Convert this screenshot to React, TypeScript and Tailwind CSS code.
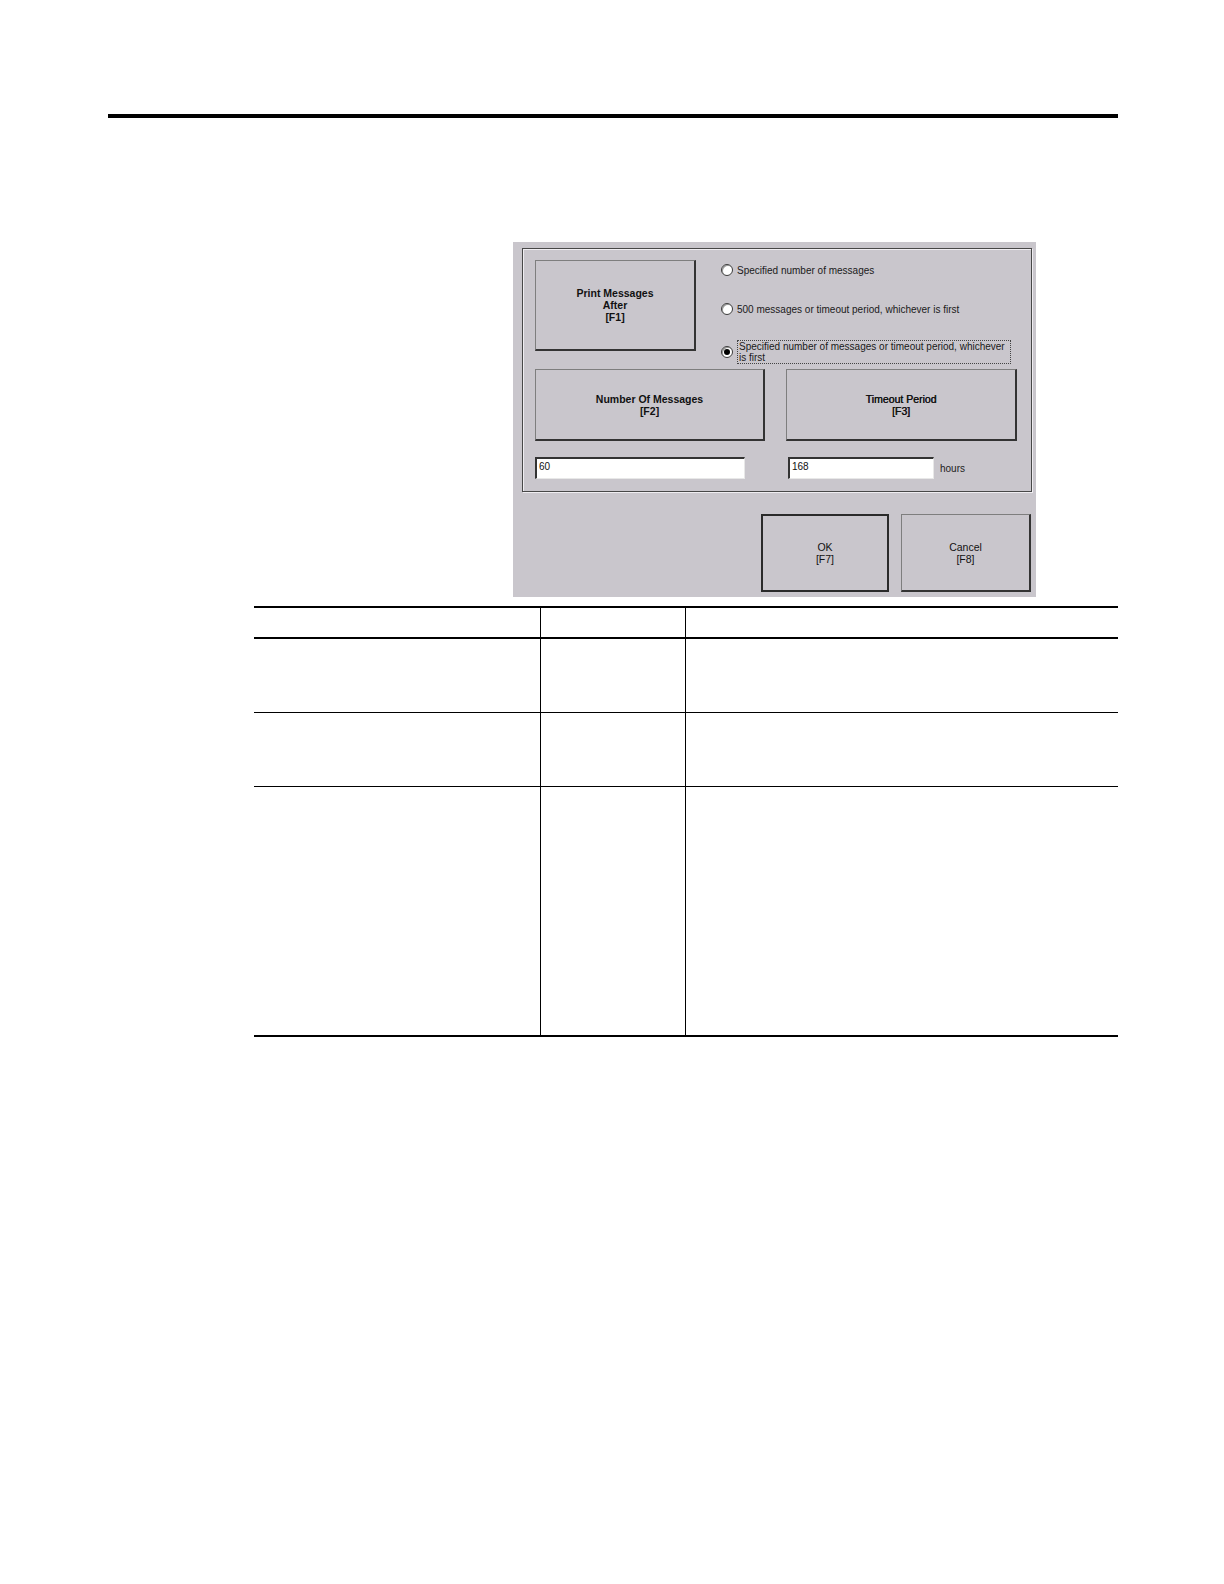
const font = { fontFamily: '"Liberation Sans", Arial, sans-serif' };

const Radio = ({ checked }: { checked?: boolean }) => (
    <span className="w-[12px] h-[12px] rounded-full bg-white border border-[#3c3c3c] flex items-center justify-center shrink-0 shadow-[inset_1px_1px_0_#9a9a9a]">
        {checked && <span className="w-[6px] h-[6px] rounded-full bg-black" />}
    </span>
);

const CeButton = ({
    lines,
    bold,
    className,
    isDefault,
}: {
    lines: string[];
    bold?: boolean;
    className: string;
    isDefault?: boolean;
}) => (
    <div
        className={`${className} bg-[#c9c6cc] flex flex-col items-center justify-center text-center text-[10.5px] leading-[12px] text-[#111] ${bold ? 'font-bold' : 'font-normal'
            } ${isDefault
                ? 'border-2 border-[#2a2a2a]'
                : 'border-t border-l border-b-2 border-r-2 border-t-[#7e7e7e] border-l-[#7e7e7e] border-b-[#333333] border-r-[#333333]'
            }`}
    >
        {lines.map((l) => (
            <span key={l} className="whitespace-nowrap">
                {l}
            </span>
        ))}
    </div>
);

const Field = ({ value, className }: { value: string; className: string }) => (
    <div
        className={`${className} h-[22px] bg-white border-t-2 border-l-2 border-b border-r border-t-[#333333] border-l-[#333333] border-b-[#e8e8e8] border-r-[#e8e8e8] text-[10px] leading-[12px] pl-[2px] pt-[2px] text-[#111]`}
    >
        {value}
    </div>
);

const PrintSettingsDialog = () => (
    <div className="ml-[513px] mt-[124px] w-[523px] h-[355px] bg-[#c9c6cc] pt-[6px] pl-[9px]" style={font}>
        {/* Group box */}
        <div className="w-[510px] h-[244px] border border-[#474747] shadow-[inset_1px_1px_0_#efedf1,1px_1px_0_#efedf1] pt-[11px] pl-[12px]">
            <div className="flex items-start">
                <CeButton
                    lines={['Print Messages', 'After', '[F1]']}
                    bold
                    className="w-[161px] h-[91px]"
                />
                <div className="ml-[25px] mt-[2px] flex flex-col text-[10px] leading-[11px] text-[#1a1a1a]">
                    <div className="flex items-center h-[16px] gap-[4px]">
                        <Radio />
                        <span>Specified number of messages</span>
                    </div>
                    <div className="flex items-center h-[16px] gap-[4px] mt-[23px]">
                        <Radio />
                        <span>500 messages or timeout period, whichever is first</span>
                    </div>
                    <div className="flex items-center gap-[4px] mt-[23px]">
                        <Radio checked />
                        <span className="w-[274px] border border-dotted border-[#444] px-[1px] py-0">
                            Specified number of messages or timeout period, whichever is first
                        </span>
                    </div>
                </div>
            </div>

            <div className="flex mt-[5px] gap-[21px]">
                <CeButton lines={['Number Of Messages', '[F2]']} bold className="w-[230px] h-[72px]" />
                <div className="[text-shadow:0.35px_0_0_#111]">
                    <CeButton lines={['Timeout Period', '[F3]']} className="w-[231px] h-[72px]" />
                </div>
            </div>

            <div className="flex items-center mt-[16px]">
                <Field value="60" className="w-[210px]" />
                <Field value="168" className="w-[146px] ml-[43px]" />
                <span className="ml-[6px] text-[10px] text-[#222]">hours</span>
            </div>
        </div>

        {/* Dialog buttons */}
        <div className="flex justify-end gap-[12px] pr-[5px] mt-[22px]">
            <CeButton lines={['OK', '[F7]']} isDefault className="w-[128px] h-[78px]" />
            <CeButton lines={['Cancel', '[F8]']} className="w-[130px] h-[78px]" />
        </div>
    </div>
);

const rows = [
    { h: 'h-[31px]', line: 'border-b-2' },
    { h: 'h-[74px]', line: 'border-b' },
    { h: 'h-[74px]', line: 'border-b' },
    { h: 'h-[250px]', line: 'border-b-2' },
];

const SettingsTable = () => (
    <div className="ml-[254px] mt-[9px] w-[864px] border-t-2 border-black">
        {rows.map((r, i) => (
            <div key={i} className={`grid grid-cols-[287px_145px_432px] ${r.h} ${r.line} border-black`}>
                <div className="border-r border-black" />
                <div className="border-r border-black" />
                <div />
            </div>
        ))}
    </div>
);

export default function App() {
    return (
        <div className="w-[1224px] h-[1584px] bg-white overflow-hidden">
            <div className="pt-[114px]">
                <div className="ml-[108px] w-[1010px] h-[4px] bg-black" />
            </div>
            <PrintSettingsDialog />
            <SettingsTable />
        </div>
    );
}
